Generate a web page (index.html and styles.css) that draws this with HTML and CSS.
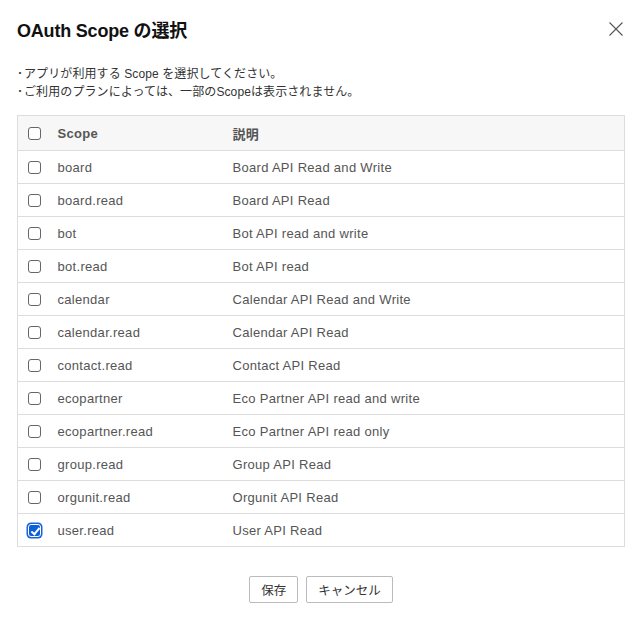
FILE: index.html
```html
<!DOCTYPE html>
<html lang="ja">
<head>
    <meta charset="UTF-8">
    <meta name="viewport" content="width=device-width, initial-scale=1.0">
    <title>OAuth Scope の選択</title>
    <link rel="stylesheet" href="styles.css">
</head>
<body>
    <div class="dialog">
        <div class="dialog-header">
            <h1>OAuth Scope の選択</h1>
            <button class="close" type="button" aria-label="閉じる">
                <svg width="14" height="14" viewBox="0 0 14 14">
                    <path d="M0.5 0.5 L13.5 13.5 M13.5 0.5 L0.5 13.5" stroke="#555" stroke-width="1.1" fill="none"/>
                </svg>
            </button>
        </div>

        <ul class="notes">
            <li>アプリが利用する Scope を選択してください。</li>
            <li>ご利用のプランによっては、一部のScopeは表示されません。</li>
        </ul>

        <table class="scopes">
            <thead>
                <tr>
                    <th class="col-check"><span class="box"></span></th>
                    <th class="col-scope">Scope</th>
                    <th>説明</th>
                </tr>
            </thead>
            <tbody>
                <tr><td class="col-check"><span class="box"></span></td><td>board</td><td>Board API Read and Write</td></tr>
                <tr><td class="col-check"><span class="box"></span></td><td>board.read</td><td>Board API Read</td></tr>
                <tr><td class="col-check"><span class="box"></span></td><td>bot</td><td>Bot API read and write</td></tr>
                <tr><td class="col-check"><span class="box"></span></td><td>bot.read</td><td>Bot API read</td></tr>
                <tr><td class="col-check"><span class="box"></span></td><td>calendar</td><td>Calendar API Read and Write</td></tr>
                <tr><td class="col-check"><span class="box"></span></td><td>calendar.read</td><td>Calendar API Read</td></tr>
                <tr><td class="col-check"><span class="box"></span></td><td>contact.read</td><td>Contact API Read</td></tr>
                <tr><td class="col-check"><span class="box"></span></td><td>ecopartner</td><td>Eco Partner API read and write</td></tr>
                <tr><td class="col-check"><span class="box"></span></td><td>ecopartner.read</td><td>Eco Partner API read only</td></tr>
                <tr><td class="col-check"><span class="box"></span></td><td>group.read</td><td>Group API Read</td></tr>
                <tr><td class="col-check"><span class="box"></span></td><td>orgunit.read</td><td>Orgunit API Read</td></tr>
                <tr><td class="col-check"><span class="box checked"></span></td><td>user.read</td><td>User API Read</td></tr>
            </tbody>
        </table>

        <div class="actions">
            <button type="button" class="btn">保存</button>
            <button type="button" class="btn">キャンセル</button>
        </div>
    </div>
</body>
</html>
```

FILE: styles.css
```css
* {
    box-sizing: border-box;
    margin: 0;
    padding: 0;
}

body {
    font-family: 'Liberation Sans', 'Noto Sans CJK JP', sans-serif;
    background: #fff;
    color: #333;
}

.dialog {
    padding: 16px 13px 0 17px;
}

.dialog-header {
    display: flex;
    align-items: center;
    justify-content: space-between;
    height: 26px;
}

h1 {
    font-size: 18px;
    font-weight: 700;
    color: #111;
    letter-spacing: -0.2px;
}

.close {
    border: none;
    background: none;
    width: 14px;
    height: 14px;
    margin-right: 2px;
    display: flex;
}

.notes {
    list-style: none;
    margin-top: 23px;
    font-size: 12px;
    line-height: 18px;
    letter-spacing: 0.1px;
    color: #333;
}

.notes li::before {
    content: "･";
    display: inline-block;
    width: 7px;
}

.scopes {
    width: 100%;
    margin-top: 14px;
    border-collapse: collapse;
    border: 1px solid #ddd;
    font-size: 13px;
    letter-spacing: 0.3px;
    color: #555;
}

.scopes th,
.scopes td {
    text-align: left;
    padding: 0;
    border-bottom: 1px solid #ddd;
    vertical-align: middle;
}

.scopes th {
    height: 35px;
    background: #f7f7f7;
    font-weight: 700;
}

.scopes td {
    height: 33px;
}

.col-check {
    width: 40px;
    padding-left: 10px !important;
}

.col-scope {
    width: 175px;
}

.box {
    display: block;
    position: relative;
    width: 13px;
    height: 13px;
    border: 1px solid #666;
    border-radius: 3px;
    background: #fff;
}

.box.checked {
    background: #0b5fd9;
    border-color: #fff;
    box-shadow: 0 0 0 1.5px #1a62d8;
}

.box.checked::after {
    content: "";
    position: absolute;
    left: 3.5px;
    top: 1px;
    width: 3px;
    height: 7px;
    border-right: 2px solid #fff;
    border-bottom: 2px solid #fff;
    transform: rotate(40deg);
}

.actions {
    display: flex;
    justify-content: center;
    gap: 8px;
    margin-top: 29px;
}

.btn {
    font-family: 'Liberation Sans', 'Noto Sans CJK JP', sans-serif;
    font-size: 12.5px;
    color: #333;
    background: #fff;
    border: 1px solid #bbb;
    border-radius: 2px;
    height: 27px;
    padding: 0 11px;
}
```
